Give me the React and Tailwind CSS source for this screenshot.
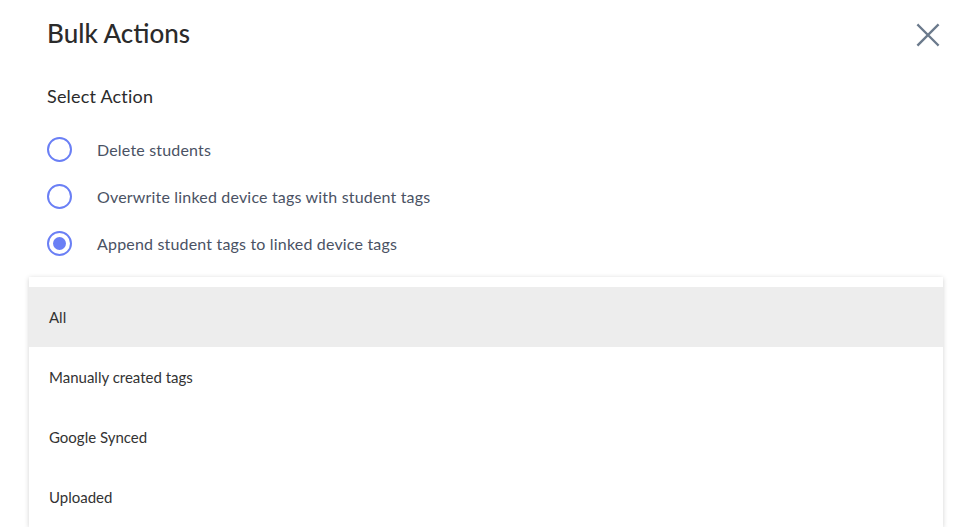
import React, { useState } from "react";

const actions = [
  "Delete students",
  "Overwrite linked device tags with student tags",
  "Append student tags to linked device tags",
];

const tagSources = ["All", "Manually created tags", "Google Synced", "Uploaded"];

export default function App() {
  const [selected, setSelected] = useState(2);
  const [source, setSource] = useState(0);

  return (
    <div
      className="relative w-[969px] h-[527px] overflow-hidden bg-white"
      style={{ fontFamily: "Lato, 'Noto Sans', sans-serif" }}
    >
      {/* Header */}
      <div className="flex items-center justify-between pl-[47px] pr-[28px] pt-[17px]">
        <h1 className="text-[26px] leading-[32px] font-medium text-[#2b2b2b]">
          Bulk Actions
        </h1>
        <button aria-label="Close" className="text-[#6b7a8c] mt-[4px]">
          <svg width="26" height="26" viewBox="0 0 24 24" fill="none" stroke="currentColor" strokeWidth="2.2" strokeLinecap="square">
            <path d="M3 3L21 21M21 3L3 21" />
          </svg>
        </button>
      </div>

      {/* Select action */}
      <div className="pl-[47px] pt-[34px]">
        <h2 className="text-[18px] leading-[26px] tracking-[0.2px] text-[#2b2b2b]">Select Action</h2>
        <div className="mt-[28px] flex flex-col gap-[22px]">
          {actions.map((label, i) => (
            <label
              key={label}
              className="flex items-center gap-[25px] cursor-pointer"
              onClick={() => setSelected(i)}
            >
              <span className="flex items-center justify-center w-[25px] h-[25px] rounded-full border-2 border-[#6a7ff5]">
                {selected === i && (
                  <span className="w-[13px] h-[13px] rounded-full bg-[#6a7ff5]" />
                )}
              </span>
              <span className="text-[16px] leading-[25px] tracking-[0.18px] text-[#4a5264]">{label}</span>
            </label>
          ))}
        </div>
      </div>

      {/* Dropdown menu */}
      <div className="absolute left-[29px] top-[277px] w-[914px] bg-white pt-[10px] shadow-[0_1px_5px_rgba(0,0,0,0.18)]">
        {tagSources.map((s, i) => (
          <div
            key={s}
            onClick={() => setSource(i)}
            className={`h-[60px] flex items-center px-[20px] text-[15px] text-[#333] cursor-pointer ${
              source === i ? "bg-[#ededed]" : "bg-white"
            }`}
          >
            {s}
          </div>
        ))}
      </div>
    </div>
  );
}
